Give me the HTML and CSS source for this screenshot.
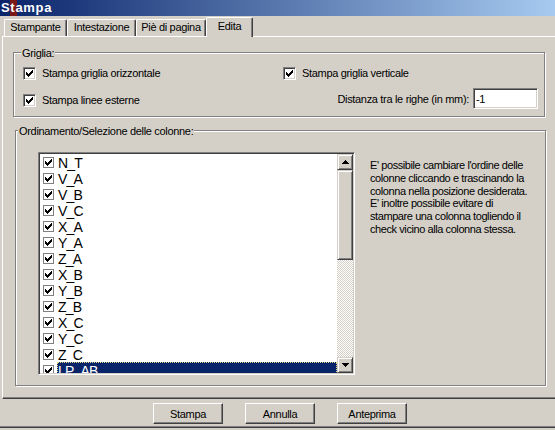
FILE: index.html
```html
<!DOCTYPE html>
<html lang="it">
<head>
<meta charset="utf-8">
<title>Stampa</title>
<link rel="stylesheet" href="styles.css">
</head>
<body>
<svg class="defs" aria-hidden="true">
  <defs>
    <symbol id="chk" viewBox="0 0 7 7"><path d="M6 0h1v1h-1z M5 1h2v1h-2z M0 2h1v1h-1z M4 2h3v1h-3z M0 3h2v1h-2z M3 3h3v1h-3z M0 4h5v1h-5z M1 5h3v1h-3z M2 6h1v1h-1z"/></symbol>
    <symbol id="up" viewBox="0 0 7 4"><path d="M3 0h1v1h-1z M2 1h3v1h-3z M1 2h5v1h-5z M0 3h7v1h-7z"/></symbol>
    <symbol id="down" viewBox="0 0 7 4"><path d="M0 0h7v1h-7z M1 1h5v1h-5z M2 2h3v1h-3z M3 3h1v1h-1z"/></symbol>
  </defs>
</svg>

<div class="titlebar">Stampa</div>

<div class="tabs">
  <div class="tab t1">Stampante</div>
  <div class="tab t2">Intestazione</div>
  <div class="tab t3">Piè di pagina</div>
  <div class="tab active">Edita</div>
</div>

<div class="panel">
  <div class="group griglia">
    <span class="legend">Griglia:</span>
    <div class="grid">
      <label class="check"><span class="box"><svg><use href="#chk"/></svg></span>Stampa griglia orizzontale</label>
      <label class="check"><span class="box"><svg><use href="#chk"/></svg></span>Stampa griglia verticale</label>
      <label class="check low"><span class="box"><svg><use href="#chk"/></svg></span>Stampa linee esterne</label>
      <div class="distance"><span>Distanza tra le righe (in mm):</span><input class="field" type="text" value="-1"></div>
    </div>
  </div>

  <div class="group ordine">
    <span class="legend">Ordinamento/Selezione delle colonne:</span>
    <div class="listbox">
      <div class="items">
        <div class="row"><span class="lchk"><svg><use href="#chk"/></svg></span><span class="name">N_T</span></div>
        <div class="row"><span class="lchk"><svg><use href="#chk"/></svg></span><span class="name">V_A</span></div>
        <div class="row"><span class="lchk"><svg><use href="#chk"/></svg></span><span class="name">V_B</span></div>
        <div class="row"><span class="lchk"><svg><use href="#chk"/></svg></span><span class="name">V_C</span></div>
        <div class="row"><span class="lchk"><svg><use href="#chk"/></svg></span><span class="name">X_A</span></div>
        <div class="row"><span class="lchk"><svg><use href="#chk"/></svg></span><span class="name">Y_A</span></div>
        <div class="row"><span class="lchk"><svg><use href="#chk"/></svg></span><span class="name">Z_A</span></div>
        <div class="row"><span class="lchk"><svg><use href="#chk"/></svg></span><span class="name">X_B</span></div>
        <div class="row"><span class="lchk"><svg><use href="#chk"/></svg></span><span class="name">Y_B</span></div>
        <div class="row"><span class="lchk"><svg><use href="#chk"/></svg></span><span class="name">Z_B</span></div>
        <div class="row"><span class="lchk"><svg><use href="#chk"/></svg></span><span class="name">X_C</span></div>
        <div class="row"><span class="lchk"><svg><use href="#chk"/></svg></span><span class="name">Y_C</span></div>
        <div class="row"><span class="lchk"><svg><use href="#chk"/></svg></span><span class="name">Z_C</span></div>
        <div class="row selected"><span class="lchk"><svg><use href="#chk"/></svg></span><span class="name">LP_AB</span></div>
      </div>
      <div class="scrollbar">
        <div class="sb-btn"><svg><use href="#up"/></svg></div>
        <div class="sb-thumb"></div>
        <div class="sb-track"></div>
        <div class="sb-btn"><svg><use href="#down"/></svg></div>
      </div>
    </div>
    <p class="help">E' possibile cambiare l'ordine delle<br>colonne cliccando e trascinando la<br>colonna nella posizione desiderata.<br>E' inoltre possibile evitare di<br>stampare una colonna togliendo il<br>check vicino alla colonna stessa.</p>
  </div>
</div>

<div class="buttons">
  <button class="btn" type="button">Stampa</button>
  <button class="btn" type="button">Annulla</button>
  <button class="btn" type="button">Anteprima</button>
</div>
<div class="bottom-line"></div>
</body>
</html>
```
FILE: styles.css
```css
* { box-sizing: border-box; }

html, body { margin: 0; padding: 0; }

body {
  width: 555px;
  height: 430px;
  overflow: hidden;
  background: #d4d0c8;
  color: #000;
  font-family: "Liberation Sans", Arial, sans-serif;
  font-size: 11px;
  letter-spacing: -0.32px;
}

.defs { position: absolute; width: 0; height: 0; overflow: hidden; }

/* title bar */
.titlebar {
  height: 16px;
  padding-left: 1px;
  background:
    linear-gradient(to right, transparent 10px, #7b1818 10px, #7b1818 17px, transparent 17px),
    linear-gradient(to right, #0a246a, #a6caf0);
  color: #fff;
  font-weight: bold;
  font-size: 13px;
  letter-spacing: 0.7px;
  line-height: 16px;
}

/* tabs */
.tabs {
  position: relative;
  z-index: 1;
  display: flex;
  align-items: flex-end;
  height: 20px;
  padding-left: 4px;
}
.tab {
  height: 17px;
  border: 1px solid #fff;
  border-bottom: 0;
  border-right-color: #404040;
  border-radius: 2px 2px 0 0;
  box-shadow: inset -1px 0 #808080;
  text-align: center;
  line-height: 15px;
  white-space: nowrap;
}
.t1 { width: 63px; }
.t2 { width: 69px; }
.t3 { width: 70px; }
.tab.active {
  width: 47px;
  height: 20px;
  margin-bottom: -1px;
  background: #d4d0c8;
  line-height: 17px;
}

/* tab page */
.panel {
  margin-left: 2px;
  height: 363px;
  border-top: 1px solid #fff;
  border-left: 1px solid #fff;
  border-bottom: 1px solid #404040;
  box-shadow: inset 0 -1px #808080;
  padding: 15px 0 0 10px;
}

.group {
  position: relative;
  border: 1px solid #808080;
  box-shadow: inset 1px 1px #fff, 1px 1px #fff;
}
.legend {
  position: absolute;
  top: -6px;
  padding: 0 1px;
  background: #d4d0c8;
  line-height: 13px;
  white-space: nowrap;
}

.griglia { width: 532px; height: 65px; }
.griglia .legend { left: 7px; }

.grid {
  display: grid;
  grid-template-columns: 260px 1fr;
  grid-template-rows: 13px 21px;
  row-gap: 8px;
  padding: 14px 6px 0 9px;
}

.check {
  display: flex;
  align-items: center;
  gap: 6px;
  white-space: nowrap;
  line-height: 13px;
}
.check.low { align-self: end; margin-bottom: 2px; }

.box {
  flex: none;
  width: 13px;
  height: 13px;
  padding: 2px;
  border: 1px solid;
  border-color: #808080 #fff #fff #808080;
  box-shadow: inset 1px 1px #404040, inset -1px -1px #d4d0c8;
  background: #fff;
}
.box svg { display: block; width: 7px; height: 7px; }

.distance {
  display: flex;
  justify-content: flex-end;
  align-items: center;
  gap: 4px;
  white-space: nowrap;
}
.field {
  width: 65px;
  height: 21px;
  margin: 0;
  padding: 0 0 0 2px;
  border: 1px solid;
  border-color: #808080 #fff #fff #808080;
  box-shadow: inset 1px 1px #404040, inset -1px -1px #d4d0c8;
  background: #fff;
  color: #000;
  font: inherit;
  letter-spacing: inherit;
  outline: none;
}

/* column ordering */
.ordine {
  width: 531px;
  height: 256px;
  margin: 13px 0 0 2px;
  display: flex;
  align-items: flex-start;
  padding: 21px 0 0 22px;
}
.ordine .legend { left: 2px; }

.listbox {
  flex: none;
  display: flex;
  width: 317px;
  height: 223px;
  padding: 1px;
  border: 1px solid;
  border-color: #808080 #fff #fff #808080;
  box-shadow: inset 1px 1px #404040, inset -1px -1px #d4d0c8;
  background: #fff;
}
.items {
  flex: 1;
  overflow: hidden;
  font-size: 14px;
  letter-spacing: -0.8px;
}
.row {
  display: flex;
  align-items: flex-start;
  height: 16px;
  padding-left: 3px;
}
.lchk {
  flex: none;
  width: 11px;
  height: 11px;
  margin-top: 3px;
  padding: 1px;
  border: 1px solid #808080;
  background: #fff;
}
.lchk svg { display: block; width: 7px; height: 7px; }
.name {
  flex: 1;
  height: 16px;
  margin-left: 3px;
  padding: 1px 0 0 1px;
  line-height: 16px;
  white-space: nowrap;
}
.row.selected .name {
  background: #0a246a;
  color: #fff;
  outline: 1px dotted #e6d88a;
  outline-offset: -1px;
}

.scrollbar {
  flex: none;
  width: 16px;
  display: flex;
  flex-direction: column;
}
.sb-btn, .sb-thumb {
  flex: none;
  border: 1px solid;
  border-color: #d4d0c8 #404040 #404040 #d4d0c8;
  box-shadow: inset 1px 1px #fff, inset -1px -1px #808080;
  background: #d4d0c8;
}
.sb-btn {
  height: 16px;
  display: flex;
  align-items: center;
  justify-content: center;
}
.sb-btn svg { display: block; width: 7px; height: 4px; }
.sb-thumb { height: 90px; }
.sb-track {
  flex: 1;
  background: repeating-conic-gradient(#d4d0c8 0 25%, #fff 0 50%) 0 0 / 2px 2px;
}

.help {
  margin: 7px 0 0 15px;
  line-height: 12.8px;
  letter-spacing: -0.42px;
  white-space: nowrap;
}

/* buttons */
.buttons {
  display: flex;
  gap: 22px;
  height: 27px;
  padding: 4px 0 0 153px;
}
.btn {
  width: 70px;
  height: 21px;
  margin: 0;
  padding: 0;
  border: 1px solid;
  border-color: #fff #404040 #404040 #fff;
  box-shadow: inset -1px -1px #808080;
  background: #d4d0c8;
  color: #000;
  font: inherit;
  letter-spacing: inherit;
}

.bottom-line {
  height: 2px;
  border-top: 1px solid #808080;
  border-bottom: 1px solid #404040;
}
```
